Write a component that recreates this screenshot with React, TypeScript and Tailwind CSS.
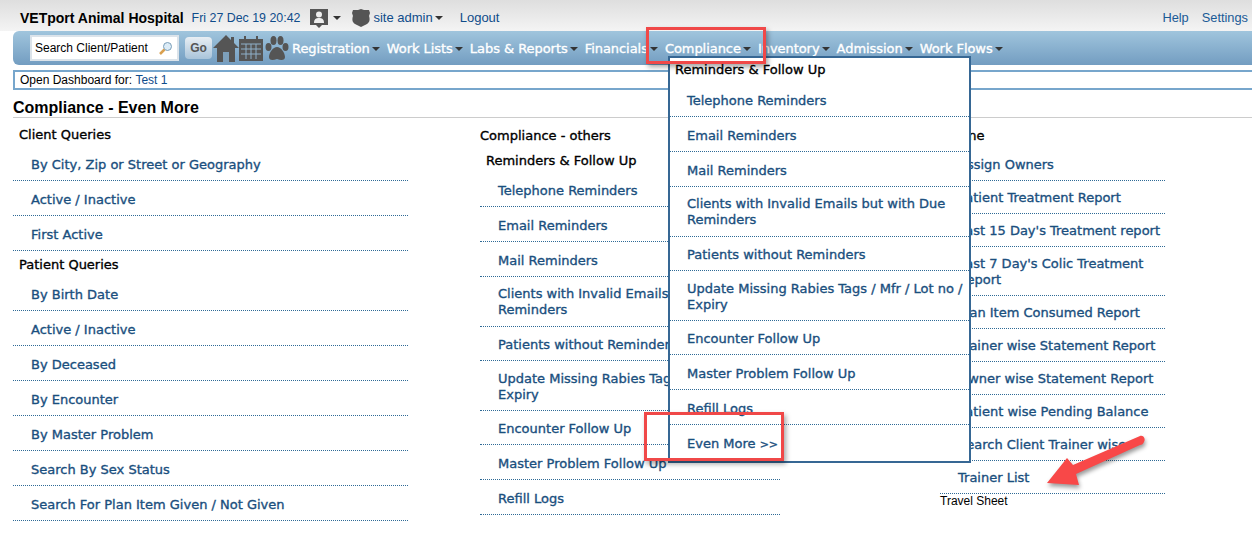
const sans = "font-['Liberation_Sans',Arial,sans-serif]";
const menuFont = "font-['DejaVu_Sans',sans-serif]";
const thick = "[-webkit-text-stroke:0.35px]";

// row heights, the text sits a little low in the single line rows
const row35 = "h-[35px] pt-[4px]";
const row34 = "h-[34px] pt-[2px]";
const row50 = "h-[50px] pt-[1px]";
const row50low = "h-[50px] pt-[3px]";
const row33 = "h-[33px] pt-[2px]";
const row49 = "h-[49px] pt-[1px]";

function Caret({ className = "" }: { className?: string }) {
  return (
    <span className={`inline-block w-0 h-0 border-x-[4px] border-x-transparent border-t-[4px] border-t-[#333] ${className}`} />
  );
}

function NavItem({ label }: { label: string }) {
  return (
    <span className="flex items-center mr-[7px]">
      <span className={`${menuFont} text-[13px] tracking-[-0.05px] text-white ${thick}`}>{label}</span>
      <Caret className="ml-[2px]" />
    </span>
  );
}

function LinkRow({ label, size = row35 }: { label: string; size?: string }) {
  return (
    <div className={`${menuFont} ${size} ${thick} text-[13px] leading-[16px] text-[#1a4f7e] border-b border-dotted border-[#2f6a96] pl-[18px] flex items-center`}>
      <span>{label}</span>
    </div>
  );
}

function Heading({ label, className = "" }: { label: string; className?: string }) {
  return <div className={`${menuFont} ${thick} text-[13px] leading-[16px] text-black ${className}`}>{label}</div>;
}

const clientLinks = ["By City, Zip or Street or Geography", "Active / Inactive", "First Active"];
const patientLinks = ["By Birth Date", "Active / Inactive", "By Deceased", "By Encounter", "By Master Problem", "Search By Sex Status", "Search For Plan Item Given / Not Given"];
const reminderLinks: [string, string][] = [
  ["Telephone Reminders", row35],
  ["Email Reminders", row35],
  ["Mail Reminders", row35],
  ["Clients with Invalid Emails but with Due Reminders", row50],
  ["Patients without Reminders", row34],
  ["Update Missing Rabies Tags / Mfr / Lot no / Expiry", row50low],
  ["Encounter Follow Up", row34],
  ["Master Problem Follow Up", row35],
  ["Refill Logs", row35],
];
const rightLinks: [string, string][] = [
  ["Assign Owners", row33],
  ["Patient Treatment Report", row33],
  ["Last 15 Day's Treatment report", row33],
  ["Last 7 Day's Colic Treatment Report", row49],
  ["Plan Item Consumed Report", row33],
  ["Trainer wise Statement Report", row33],
  ["Owner wise Statement Report", row33],
  ["Patient wise Pending Balance", row33],
  ["Search Client Trainer wise", row33],
  ["Trainer List", row33],
];

export default function App() {
  return (
    <div className={`relative w-[1252px] h-[551px] overflow-hidden bg-white ${sans}`}>
      {/* top bar */}
      <div className="h-[31px] bg-gradient-to-b from-[#dedede] to-[#f4f4f4] flex items-center pl-[20px] pr-[4px] pt-[5px]">
        <span className="text-[14px] font-bold text-black">VETport Animal Hospital</span>
        <span className="text-[12.4px] text-[#0f4c8a] ml-[8px]">Fri 27 Dec 19 20:42</span>
        <svg className="ml-[10px]" width="18" height="19" viewBox="0 0 18 19">
          <path d="M0 0h18v16h-6l-3 3-3-3H0z" fill="#555" />
          <circle cx="9" cy="5.500" r="3" fill="#eee" />
          <path d="M4 14c0-4 2-5 5-5s5 1 5 5z" fill="#eee" />
        </svg>
        <Caret className="ml-[5px]" />
        <svg className="ml-[11px]" width="18" height="18" viewBox="0 0 18 18">
          <path d="M9 0l3 1h5l1 3-1 3c1 3 1 6-2 8l-6 3-6-3c-3-2-3-5-2-8L0 4l1-3h5z" fill="#555" />
        </svg>
        <span className="text-[13px] text-[#0f4c8a] ml-[3px]">site admin</span>
        <Caret className="ml-[2px]" />
        <span className="text-[13px] text-[#0f4c8a] ml-[17px]">Logout</span>
        <span className="ml-auto text-[12.8px] text-[#1a5a96]">Help</span>
        <span className="ml-[13px] text-[12.8px] text-[#1a5a96]">Settings</span>
      </div>

      {/* nav bar */}
      <div className="ml-[13px] h-[34px] rounded-l-[6px] bg-gradient-to-b from-[#a0c5dd] to-[#739dc1] flex items-center pl-[17px]">
        <div className="w-[149px] h-[26px] bg-white border-2 border-[#dbe3ea] flex items-center justify-between pl-[3px] pr-[4px]">
          <span className="text-[12px] text-black">Search Client/Patient</span>
          <svg width="15" height="15" viewBox="0 0 15 15">
            <circle cx="9.500" cy="5.500" r="4" fill="#dcecf7" stroke="#7a9db8" />
            <path d="M6.500 8.500L2 13" stroke="#d9a050" strokeWidth="2.500" />
          </svg>
        </div>
        <div className="ml-[6px] w-[27px] h-[22px] rounded-[4px] bg-gradient-to-b from-[#e8eef3] to-[#a9c4da] flex items-center justify-center text-[12px] font-bold text-[#555]">
          Go
        </div>
        <svg className="ml-[1px]" width="26" height="27" viewBox="0 0 26 27">
          <path d="M13 0L0 13h4v14h18V13h4l-5-5V2h-3v3z" fill="#555" />
          <rect x="10" y="17" width="6" height="10" fill="#7d9fba" />
        </svg>
        <svg width="24" height="26" viewBox="0 0 24 26">
          <path d="M0 4h5V1h2v3h10V1h2v3h5v22H0z" fill="#555" />
          <path d="M2 9h20M2 14h20M2 19h20M7 9v15M12 9v15M17 9v15" stroke="#8fb0c9" strokeWidth="1" />
        </svg>
        <svg className="ml-[2px]" width="24" height="25" viewBox="0 0 24 25">
          <ellipse cx="3.500" cy="11" rx="3" ry="4" fill="#555" />
          <ellipse cx="8.500" cy="4.500" rx="3" ry="4.500" fill="#555" />
          <ellipse cx="15.500" cy="4.500" rx="3" ry="4.500" fill="#555" />
          <ellipse cx="20.500" cy="11" rx="3" ry="4" fill="#555" />
          <path d="M12 11c4 0 8 6 8 10 0 3-3 4-8 2-5 2-8 1-8-2 0-4 4-10 8-10z" fill="#555" />
        </svg>
        <div className="flex items-center ml-[3px] pt-[1px]">
          {["Registration", "Work Lists", "Labs & Reports", "Financials", "Compliance", "Inventory", "Admission", "Work Flows"].map((l) => (
            <NavItem key={l} label={l} />
          ))}
        </div>
      </div>

      {/* dashboard strip */}
      <div className="mt-[5px] ml-[13px] h-[20px] border-y-2 border-l-2 border-[#77a6cc] flex items-center pl-[5px] text-[12px] text-black">
        Open Dashboard for:&nbsp;<span className="text-[#0f4c8a]">Test 1</span>
      </div>

      <div className="ml-[13px] mt-[9px] h-[19px] border-b border-[#ccc] text-[16px] leading-[18px] font-bold text-black">
        Compliance - Even More
      </div>

      {/* columns */}
      <div className="flex pl-[13px] pt-[9px]">
        <div className="w-[395px]">
          <Heading label="Client Queries" className="pl-[6px] h-[19px]" />
          {clientLinks.map((l) => <LinkRow key={l} label={l} />)}
          <Heading label="Patient Queries" className="pl-[6px] h-[19px] mt-[6px]" />
          {patientLinks.map((l) => <LinkRow key={l} label={l} />)}
        </div>
        <div className="w-[300px] ml-[72px]">
          <Heading label="Compliance - others" className="h-[26px] pt-[1px]" />
          <Heading label="Reminders & Follow Up" className="pl-[6px] h-[19px]" />
          {reminderLinks.map(([l, s]) => <LinkRow key={l} label={l} size={s} />)}
        </div>
        <div className="w-[225px] ml-[160px]">
          <Heading label="Equine" className="h-[21px] pt-[1px]" />
          {rightLinks.map(([l, s]) => <LinkRow key={l} label={l} size={s} />)}
          <div className="text-[12px] leading-[14px] text-black">Travel Sheet</div>
        </div>
      </div>

      {/* open dropdown */}
      <div className="absolute left-[668px] top-[56px] w-[303px] h-[407px] bg-white border-2 border-[#366794]">
        <Heading label="Reminders & Follow Up" className="pl-[5px] pt-[4px] h-[24px]" />
        <div className="[&>div]:pl-[17px]">
          {reminderLinks.map(([l, s]) => <LinkRow key={l} label={l} size={s} />)}
        </div>
        <div className={`${menuFont} ${thick} text-[13px] text-[#1a4f7e] pl-[17px] pt-[9px]`}>
          Even More <span className="text-[11px]">&gt;&gt;</span>
        </div>
      </div>

      {/* annotations */}
      <div className="absolute left-[646px] top-[27px] w-[120px] h-[37px] border-[3px] border-[#f04848] shadow-[2px_3px_5px_rgba(0,0,0,0.35)]" />
      <div className="absolute left-[644px] top-[412px] w-[140px] h-[49px] border-[3px] border-[#f04848] shadow-[2px_3px_5px_rgba(0,0,0,0.35)]" />
      <svg className="absolute left-[1040px] top-[430px] [filter:drop-shadow(1px_3px_2px_rgba(0,0,0,0.4))]" width="110" height="65" viewBox="0 0 110 65">
        <path d="M7 53L27 28l6 7 67-29c3-1 6 2 4 6-1 2-2 3-4 3L36 44l3 11z" fill="#f84848" />
      </svg>
    </div>
  );
}
